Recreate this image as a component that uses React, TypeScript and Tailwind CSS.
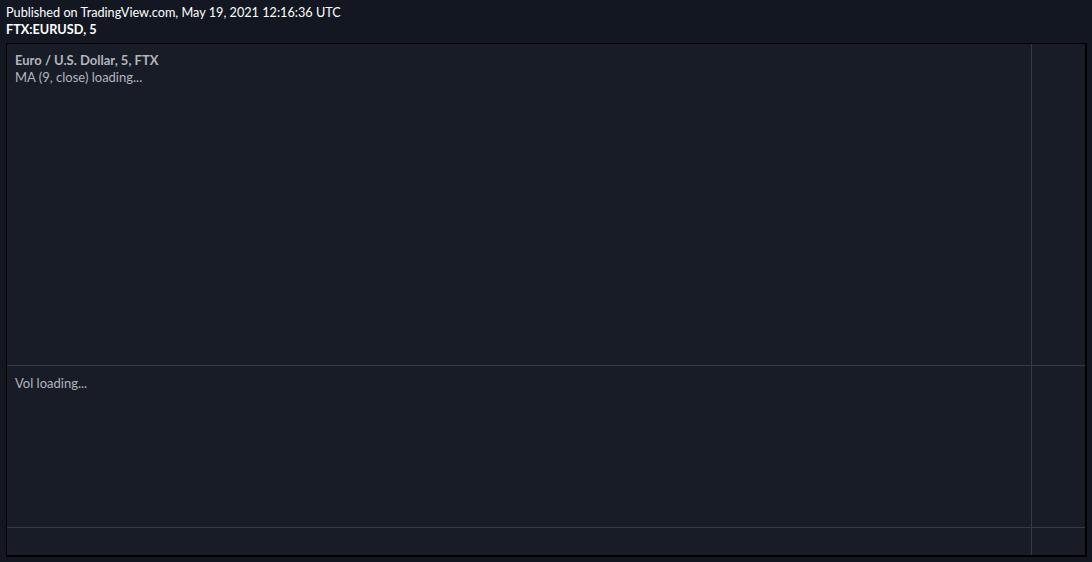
export default function App() {
  return (
    <div
      className="w-[1092px] h-[562px] bg-[#131722] overflow-hidden"
      style={{ fontFamily: "Lato, 'Open Sans', sans-serif" }}
    >
      <div className="pl-[6px] pt-[4px] h-[43px] text-white text-[12.7px] leading-[17px]">
        <div>Published on TradingView.com, May 19, 2021 12:16:36 UTC</div>
        <div className="font-bold">FTX:EURUSD, 5</div>
      </div>
      <div className="ml-[6px] w-[1081px] border-l border-t border-r-2 border-b-2 border-black bg-[#181c27] flex flex-col">
        <div className="flex h-[322px] border-b border-[#363a45]">
          <div className="w-[1025px] border-r border-[#363a45] pl-[8px] pt-[8px] text-[13px] leading-[17px] text-[#b2b5be]">
            <div className="font-bold">Euro / U.S. Dollar, 5, FTX</div>
            <div>MA (9, close) loading...</div>
          </div>
          <div className="flex-1" />
        </div>
        <div className="flex h-[162px] border-b border-[#363a45]">
          <div className="w-[1025px] border-r border-[#363a45] pl-[8px] pt-[9px] text-[13px] leading-[17px] text-[#b2b5be]">
            <div>Vol loading...</div>
          </div>
          <div className="flex-1" />
        </div>
        <div className="flex h-[27px]">
          <div className="w-[1025px] border-r border-[#363a45]" />
          <div className="flex-1" />
        </div>
      </div>
    </div>
  );
}
